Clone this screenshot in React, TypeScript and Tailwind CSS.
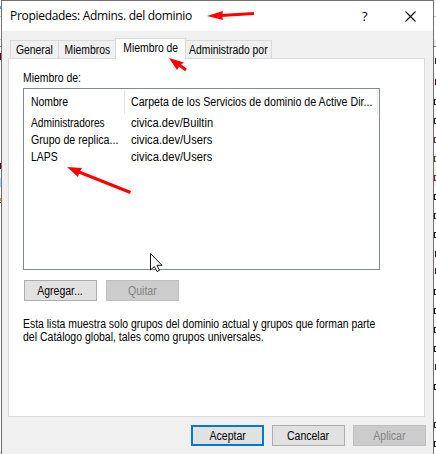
import React from "react";

const rows = [
  ["Administradores", "scale-x-[0.85]", "civica.dev/Builtin", "scale-x-[0.925]"],
  ["Grupo de replica...", "scale-x-[0.885]", "civica.dev/Users", "scale-x-[0.93]"],
  ["LAPS", "scale-x-[0.87]", "civica.dev/Users", "scale-x-[0.93]"],
];

const marks: [number, string][] = [
  [61, "#5a0010"], [82, "#5a0010"], [102, "#101820"], [121, "#101820"], [140, "#6a3010"],
  [159, "#6a3010"], [178, "#6a3010"], [197, "#101010"], [216, "#101820"], [235, "#101820"],
  [254, "#5a0010"], [271, "#5a0010"], [292, "#101820"], [311, "#101010"], [330, "#101820"],
  [349, "#101820"], [367, "#5a0010"], [387, "#101010"], [425, "#101820"], [444, "#101820"],
];

function Text({ children, className = "origin-left scale-x-[0.87]" }: { children: React.ReactNode; className?: string }) {
  return <span className={`inline-block whitespace-nowrap ${className}`}>{children}</span>;
}

function Button({ children, kind = "normal" }: { children: React.ReactNode; kind?: "normal" | "default" | "disabled" }) {
  const look =
    kind === "default"
      ? "border-2 border-[#0078d7] bg-[#e1e1e1] text-black"
      : kind === "disabled"
        ? "border border-[#bfbfbf] bg-[#cccccc] text-[#838383]"
        : "border border-[#adadad] bg-[#e1e1e1] text-black";
  return (
    <button className={`flex h-[21px] w-[73px] items-center justify-center pt-[2px] ${look}`}>
      <Text className="scale-x-[0.875]">{children}</Text>
    </button>
  );
}

function Tab({ children, className }: { children: React.ReactNode; className: string }) {
  return (
    <div className={`flex h-[18px] items-center justify-center border-t border-r border-[#d9d9d9] bg-[#f0f0f0] pt-[2px] ${className}`}>
      <Text className="scale-x-[0.865]">{children}</Text>
    </div>
  );
}

export default function App() {
  return (
    <div className="relative flex h-[454px] w-[436px] overflow-hidden bg-white font-['Liberation_Sans',Arial,sans-serif] text-[12px] leading-[13px] text-black">
      <svg className="h-[454px] w-px shrink-0" viewBox="0 0 1 454" shapeRendering="crispEdges">
        <rect y="6" width="1" height="3" fill="#4cabe8" />
        <rect y="16" width="1" height="1" fill="#c8c8c8" />
        <rect y="39" width="1" height="1" fill="#c8c8c8" />
        <rect y="46" width="1" height="1" fill="#888" />
        <rect y="53" width="1" height="7" fill="#64002c" />
        <rect y="163" width="1" height="6" fill="#64002c" />
        <rect y="178" width="1" height="9" fill="#9bdcff" />
        <rect y="198" width="1" height="3" fill="#d09040" />
        <rect y="202" width="1" height="1" fill="#111" />
        <rect y="451" width="1" height="3" fill="#ddd" />
      </svg>
      <div className="flex w-[433px] shrink-0 flex-col border-x border-t border-[#707070] bg-[#f0f0f0]">
        <header className="flex h-[30px] shrink-0 items-center bg-white pl-2">
          <h1 className="w-[316px] pb-px font-['Open_Sans','Noto_Sans',sans-serif] text-[12px] leading-4 tracking-[-0.3px] whitespace-nowrap">
            Propiedades: Admins. del dominio
          </h1>
          <span className="w-[42px] pl-[36px] font-['Open_Sans',sans-serif] text-[13px] leading-4 font-medium">?</span>
          <svg className="mt-px ml-[37px] h-[11px] w-[11px]" viewBox="0 0 11 11" fill="none" stroke="#000" strokeWidth="1.1">
            <path d="M.5.5l10 10M10.5.5l-10 10" />
          </svg>
        </header>
        <div className="mt-[7px] flex h-5 shrink-0 items-end pl-2">
          <Tab className="w-[49px] border-l">General</Tab>
          <Tab className="w-[56px] border-r-0">Miembros</Tab>
          <div className="z-10 -mb-px flex h-[21px] w-[71px] items-center justify-center border-x border-t border-[#d9d9d9] bg-white pb-[2px]">
            <Text className="scale-x-[0.865]">Miembro de</Text>
          </div>
          <Tab className="w-[86px]">Administrado por</Tab>
        </div>
        <main className="ml-[6px] flex h-[359px] w-[417px] shrink-0 flex-col border border-[#d9d9d9] bg-white pl-[14px]">
          <p className="mt-[13px] h-4">
            <Text>Miembro de:</Text>
          </p>
          <div className="h-[182px] w-[357px] shrink-0 border border-[#828790]">
            <div className="flex h-[26px] pt-px pb-px">
              <div className="w-[101px] border-r border-[#e5e5e5] pt-[6px] pl-[7px]">
                <Text>Nombre</Text>
              </div>
              <div className="w-[253px] border-r border-[#e5e5e5] pt-[6px] pl-[6px]">
                <Text className="origin-left scale-x-[0.887]">Carpeta de los Servicios de dominio de Active Dir...</Text>
              </div>
            </div>
            {rows.map((r, i) => (
              <div key={i} className="flex h-[17px] items-center">
                <div className="w-[107px] pl-[7px]">
                  <Text className={`origin-left ${r[1]}`}>{r[0]}</Text>
                </div>
                <Text className={`origin-left ${r[3]}`}>{r[2]}</Text>
              </div>
            ))}
          </div>
          <div className="mt-[10px] ml-px flex gap-[9px]">
            <Button>Agregar...</Button>
            <Button kind="disabled">Quitar</Button>
          </div>
          <p className="mt-[17px] flex flex-col items-start">
            <Text>Esta lista muestra solo grupos del dominio actual y grupos que forman parte</Text>
            <Text className="origin-left scale-x-[0.876]">del Catálogo global, tales como grupos universales.</Text>
          </p>
        </main>
        <footer className="mt-2 ml-[189px] flex gap-2">
          <Button kind="default">Aceptar</Button>
          <Button>Cancelar</Button>
          <Button kind="disabled">Aplicar</Button>
        </footer>
      </div>
      <svg className="h-[454px] w-[2px] shrink-0" viewBox="0 0 2 454" shapeRendering="crispEdges">
        <rect y="16" width="2" height="1" fill="#bbb" />
        <rect y="39" width="2" height="7" fill="#eee" />
        <rect y="46" width="2" height="1" fill="#777" />
        <rect y="167" width="2" height="19" fill="#eee" />
        {marks.map(([y, c]) =>
          c === "#5a0010" ? (
            <rect key={y} x="1" y={y - 3} width="1" height="6" fill={c} />
          ) : (
            <path key={y} d={`M2 ${y - 2.5}H.5V${y + 2.5}H2`} fill="none" stroke={c} />
          ),
        )}
      </svg>
      <svg className="pointer-events-none absolute inset-0 z-20 h-[454px] w-[436px]" viewBox="0 0 436 454">
        <path d="M254 13.5L221 15.5M186 70L178 64M130.500 192.500L79 172" fill="none" stroke="#f00" strokeWidth="3" />
        <g fill="#f00">
          <path d="M207 16L223 11L222 15.500L223 20Z" />
          <path d="M169 58L184 62.500L180 65L177 70Z" />
          <path d="M67 167L82 168L79.500 172L78 177Z" />
        </g>
        <path d="M150.500 253.500V270L154.300 266.500L157 271.500L159.500 270.400L157 265.300H162Z" fill="#fff" stroke="#111" />
      </svg>
    </div>
  );
}
